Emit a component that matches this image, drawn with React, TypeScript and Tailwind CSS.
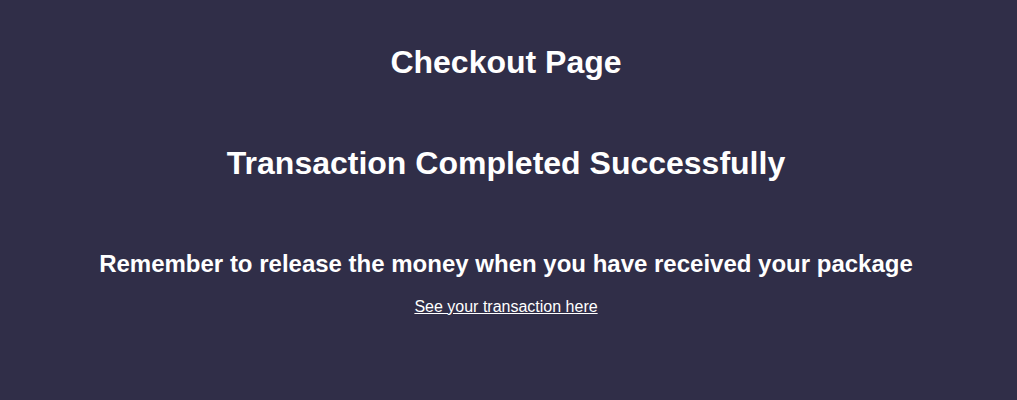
import React from "react";

function App() {
  return (
    <div className="min-h-screen bg-[#302e48] text-white font-['Liberation_Sans',Arial,sans-serif]">
      <div className="flex flex-col items-center pt-[44px] pr-[5px] text-center">
        <h1 className="text-[32px] font-bold leading-[37px]">Checkout Page</h1>
        <h1 className="mt-[64px] text-[32px] font-bold leading-[37px]">
          Transaction Completed Successfully
        </h1>
        <h2 className="mt-[68px] text-[24px] font-bold leading-[28px]">
          Remember to release the money when you have received your package
        </h2>
        <a href="#" className="mt-[20px] text-base leading-[18px] underline">
          See your transaction here
        </a>
      </div>
    </div>
  );
}

export default App;
